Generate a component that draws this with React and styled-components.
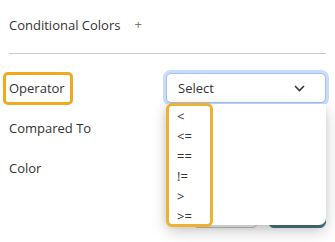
import styled, { createGlobalStyle } from "styled-components";

const GlobalStyle = createGlobalStyle`
  body {
    margin: 0;
    background: #ffffff;
    font-family: "Open Sans", "Liberation Sans", sans-serif;
    color: #333333;
  }
`;

const Page = styled.div`
  width: 335px;
  height: 242px;
  padding: 0 9px;
  box-sizing: border-box;
  overflow: hidden;
`;

const Header = styled.div`
  display: flex;
  align-items: center;
  gap: 14px;
  padding-top: 14px;
  height: 22px;
  font-size: 13px;
`;

const Plus = styled.span`
  font-size: 13px;
  color: #777777;
  margin-top: -3px;
`;

const Divider = styled.div`
  height: 1px;
  background: #c9c9c9;
  margin-top: 17px;
`;

const Form = styled.div`
  display: grid;
  grid-template-columns: 157px 1fr;
  grid-auto-rows: 36px;
  row-gap: 4px;
  margin-top: 16px;
  font-size: 13px;
`;

const Label = styled.div`
  display: flex;
  align-items: center;
`;

const Highlight = styled.div`
  display: flex;
  align-items: center;
  box-sizing: border-box;
  width: ${(p) => p.width}px;
  height: 33px;
  margin-left: -6px;
  padding-left: 3px;
  border: 3px solid #f0aa1e;
  border-radius: 5px;
`;

const Control = styled.div`
  position: relative;
  display: flex;
  align-items: center;
`;

const SelectBox = styled.div`
  display: flex;
  align-items: center;
  justify-content: space-between;
  box-sizing: border-box;
  width: 100%;
  height: 30px;
  padding: 0 20px 0 11px;
  background: #ffffff;
  border: 1px solid #9fc3f2;
  border-radius: 5px;
  box-shadow: 0 0 0 3px #c6dcfa;
  font-size: 13px;
  color: #333333;
`;

const Menu = styled.div`
  position: absolute;
  top: 34px;
  left: 1px;
  right: 0;
  height: 121px;
  background: #ffffff;
  border-radius: 0 0 7px 7px;
  box-shadow: 0 6px 16px rgba(0, 0, 0, 0.22), -2px 2px 6px rgba(0, 0, 0, 0.08);
  z-index: 5;
`;

const OptionGroup = styled.div`
  position: absolute;
  top: -1px;
  left: -1px;
  width: 47px;
  height: 124px;
  box-sizing: border-box;
  border: 3px solid #f0b12e;
  border-radius: 6px;
  display: flex;
  flex-direction: column;
`;

const Option = styled.div`
  height: 20px;
  line-height: 20px;
  padding-left: 8px;
  font-size: 13px;
  color: #333333;
  flex-shrink: 0;
`;

const Buttons = styled.div`
  display: flex;
  justify-content: flex-end;
  gap: 10px;
  margin-top: 10px;
`;

const Button = styled.button`
  height: 32px;
  width: ${(p) => p.width}px;
  border-radius: 6px;
  font-family: inherit;
  font-size: 13px;
  border: 1px solid ${(p) => (p.primary ? "#4b7986" : "#c4c4c4")};
  background: ${(p) => (p.primary ? "#4b7986" : "#ffffff")};
  color: ${(p) => (p.primary ? "#ffffff" : "#333333")};
`;

const Chevron = () => (
  <svg width="11" height="7" viewBox="0 0 11 7" fill="none">
    <path d="M1 1l4.5 4.5L10 1" stroke="#333" strokeWidth="1.6" />
  </svg>
);

const operators = ["<", "<=", "==", "!=", ">", ">="];

const App = () => {
  return (
    <Page>
      <GlobalStyle />
      <Header>
        <span>Conditional Colors</span>
        <Plus>+</Plus>
      </Header>
      <Divider />
      <Form>
        <Label>
          <Highlight width={70}>Operator</Highlight>
        </Label>
        <Control>
          <SelectBox>
            <span>Select</span>
            <Chevron />
          </SelectBox>
          <Menu>
            <OptionGroup>
              {operators.map((op) => (
                <Option key={op}>{op}</Option>
              ))}
            </OptionGroup>
          </Menu>
        </Control>
        <Label>Compared To</Label>
        <Control />
        <Label>Color</Label>
        <Control />
      </Form>
      <Buttons>
        <Button width={66}>Cancel</Button>
        <Button width={58} primary>
          Apply
        </Button>
      </Buttons>
    </Page>
  );
};

export default App;
